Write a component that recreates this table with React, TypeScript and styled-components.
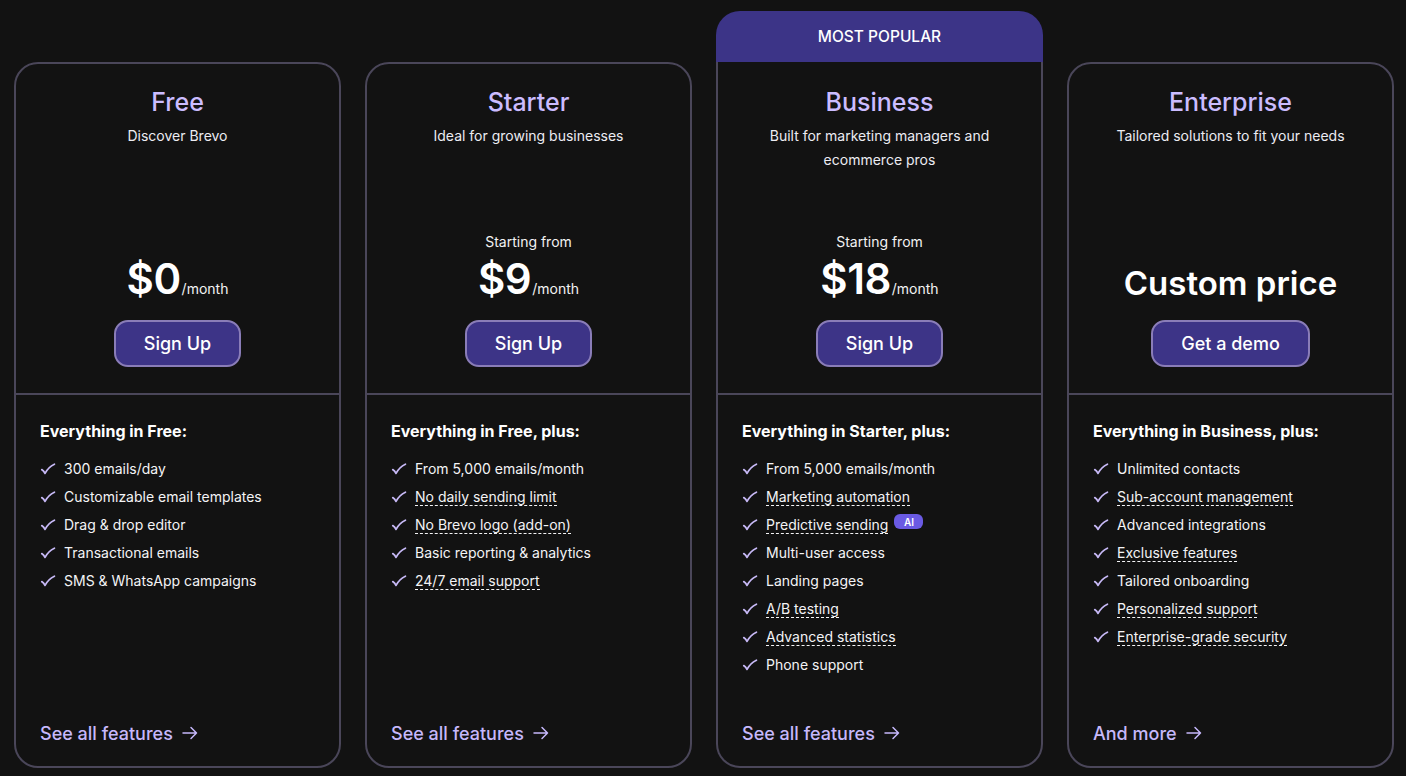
import React from 'react';
import styled, { createGlobalStyle } from 'styled-components';

const GlobalStyle = createGlobalStyle`
	html, body {
		margin: 0;
		padding: 0;
		background: #121212;
	}
	body {
		font-family: Inter, 'Noto Sans', sans-serif;
		color: #f2f2f2;
		-webkit-font-smoothing: antialiased;
	}
`;

interface Feature {
	label: string;
	dashed?: boolean;
	ai?: boolean;
}

interface Plan {
	name: string;
	tagline: string;
	note?: string;
	price?: string;
	customPrice?: string;
	cta: string;
	includes: string;
	features: Feature[];
	link: string;
	popular?: boolean;
}

const plans: Plan[] = [
	{
		name: 'Free',
		tagline: 'Discover Brevo',
		price: '$0',
		cta: 'Sign Up',
		includes: 'Everything in Free:',
		features: [
			{ label: '300 emails/day' },
			{ label: 'Customizable email templates' },
			{ label: 'Drag & drop editor' },
			{ label: 'Transactional emails' },
			{ label: 'SMS & WhatsApp campaigns' }
		],
		link: 'See all features'
	},
	{
		name: 'Starter',
		tagline: 'Ideal for growing businesses',
		note: 'Starting from',
		price: '$9',
		cta: 'Sign Up',
		includes: 'Everything in Free, plus:',
		features: [
			{ label: 'From 5,000 emails/month' },
			{ label: 'No daily sending limit', dashed: true },
			{ label: 'No Brevo logo (add-on)', dashed: true },
			{ label: 'Basic reporting & analytics' },
			{ label: '24/7 email support', dashed: true }
		],
		link: 'See all features'
	},
	{
		name: 'Business',
		tagline: 'Built for marketing managers and ecommerce pros',
		note: 'Starting from',
		price: '$18',
		cta: 'Sign Up',
		includes: 'Everything in Starter, plus:',
		features: [
			{ label: 'From 5,000 emails/month' },
			{ label: 'Marketing automation', dashed: true },
			{ label: 'Predictive sending', dashed: true, ai: true },
			{ label: 'Multi-user access' },
			{ label: 'Landing pages' },
			{ label: 'A/B testing', dashed: true },
			{ label: 'Advanced statistics', dashed: true },
			{ label: 'Phone support' }
		],
		link: 'See all features',
		popular: true
	},
	{
		name: 'Enterprise',
		tagline: 'Tailored solutions to fit your needs',
		customPrice: 'Custom price',
		cta: 'Get a demo',
		includes: 'Everything in Business, plus:',
		features: [
			{ label: 'Unlimited contacts' },
			{ label: 'Sub-account management', dashed: true },
			{ label: 'Advanced integrations' },
			{ label: 'Exclusive features', dashed: true },
			{ label: 'Tailored onboarding' },
			{ label: 'Personalized support', dashed: true },
			{ label: 'Enterprise-grade security', dashed: true }
		],
		link: 'And more'
	}
];

const Page = styled.div`
	display: grid;
	grid-template-columns: repeat(4, 327px);
	gap: 24px;
	padding: 11px 13px 8px 14px;
	align-items: stretch;
`;

const Column = styled.div`
	display: flex;
	flex-direction: column;
`;

const Banner = styled.div<{ $visible: boolean }>`
	height: 51px;
	flex-shrink: 0;
	display: flex;
	align-items: center;
	justify-content: center;
	border-radius: 24px 24px 0 0;
	background: ${(p) => (p.$visible ? '#3c3487' : 'transparent')};
	color: #ffffff;
	font-size: 15.5px;
	font-weight: 500;
`;

const Card = styled.div<{ $popular: boolean }>`
	flex: 1;
	display: flex;
	flex-direction: column;
	border: 2px solid #4a4659;
	border-top-width: ${(p) => (p.$popular ? 0 : 2)}px;
	border-radius: ${(p) => (p.$popular ? '0 0 24px 24px' : '24px')};
	padding-top: ${(p) => (p.$popular ? 2 : 0)}px;
`;

const Top = styled.div`
	height: 331px;
	box-sizing: border-box;
	display: flex;
	flex-direction: column;
	align-items: center;
	padding: 22px 24px 26px;
	border-bottom: 2px solid #4a4659;
	text-align: center;
`;

const Name = styled.h2`
	margin: 0;
	font-size: 25px;
	line-height: 32px;
	font-weight: 500;
	color: #cbbcff;
`;

const Tagline = styled.p`
	margin: 6px 0 0;
	max-width: 250px;
	font-size: 14px;
	line-height: 24px;
	color: #ececf2;
`;

const PriceBlock = styled.div`
	margin-top: auto;
	display: flex;
	flex-direction: column;
	align-items: center;
`;

const Note = styled.div`
	height: 20px;
	font-size: 14px;
	line-height: 20px;
	color: #f2f2f2;
`;

const PriceRow = styled.div`
	margin-top: 3px;
	height: 48px;
	display: flex;
	align-items: baseline;
	justify-content: center;
	line-height: 48px;
`;

const Amount = styled.span`
	font-size: 42px;
	font-weight: 600;
	color: #ffffff;
	letter-spacing: -0.5px;
`;

const CustomAmount = styled.span`
	align-self: flex-end;
	margin-bottom: 4px;
	font-size: 33px;
	line-height: 32px;
	font-weight: 600;
	color: #ffffff;
`;

const Per = styled.span`
	font-size: 14px;
	color: #f2f2f2;
	margin-left: 1px;
`;

const Button = styled.button`
	margin-top: 17px;
	height: 47px;
	padding: 0 28px;
	box-sizing: border-box;
	border: 2px solid #8a7db8;
	border-radius: 14px;
	background: #3d3487;
	color: #ffffff;
	font-family: inherit;
	font-size: 18px;
	font-weight: 500;
	cursor: pointer;
`;

const Bottom = styled.div`
	flex: 1;
	display: flex;
	flex-direction: column;
	padding: 24px 24px 21px;
`;

const Includes = styled.div`
	font-size: 16px;
	line-height: 24px;
	font-weight: 700;
	color: #ffffff;
`;

const List = styled.ul`
	list-style: none;
	margin: 11px 0 43px;
	padding: 0;
`;

const Item = styled.li`
	display: flex;
	align-items: center;
	gap: 8px;
	height: 28px;
	font-size: 14px;
	color: #f4f4f6;
`;

const Label = styled.span<{ $dashed?: boolean }>`
	line-height: 17px;
	border-bottom: 1px ${(p) => (p.$dashed ? 'dashed #f4f4f6' : 'solid transparent')};
	margin-top: 1px;
`;

const AiBadge = styled.span`
	display: inline-flex;
	align-items: center;
	justify-content: center;
	width: 29px;
	height: 15px;
	margin-left: -2px;
	margin-top: -5px;
	border-radius: 6px;
	background: #6a5ae3;
	color: #ffffff;
	font-size: 10px;
	font-weight: 600;
`;

const MoreLink = styled.a`
	margin-top: auto;
	display: inline-flex;
	align-items: center;
	gap: 8px;
	height: 24px;
	font-size: 18px;
	font-weight: 500;
	color: #c6b8fb;
	text-decoration: none;
	cursor: pointer;
`;

const CheckIcon = () => (
	<svg width="16" height="16" viewBox="0 0 16 16" fill="none" style={{ flexShrink: 0 }}>
		<path
			d="M1.8 9.6 C3 10.2 4.2 11.5 5 13.4 C7 9.6 9.8 6.4 14.4 4.2"
			stroke="#c7b9f6"
			strokeWidth="1.8"
			strokeLinecap="round"
			strokeLinejoin="round"
		/>
	</svg>
);

const ArrowIcon = () => (
	<svg width="18" height="18" viewBox="0 0 18 18" fill="none">
		<path
			d="M2 9 H15.5 M10 3.5 L15.5 9 L10 14.5"
			stroke="#c6b8fb"
			strokeWidth="1.5"
			strokeLinecap="round"
			strokeLinejoin="round"
		/>
	</svg>
);

const PlanCard: React.FC<{ plan: Plan }> = ({ plan }) => (
	<Column>
		<Banner $visible={!!plan.popular}>{plan.popular ? 'MOST POPULAR' : null}</Banner>
		<Card $popular={!!plan.popular}>
			<Top>
				<Name>{plan.name}</Name>
				<Tagline>{plan.tagline}</Tagline>
				<PriceBlock>
					<Note>{plan.note}</Note>
					<PriceRow>
						{plan.customPrice ? (
							<CustomAmount>{plan.customPrice}</CustomAmount>
						) : (
							<>
								<Amount>{plan.price}</Amount>
								<Per>/month</Per>
							</>
						)}
					</PriceRow>
				</PriceBlock>
				<Button>{plan.cta}</Button>
			</Top>
			<Bottom>
				<Includes>{plan.includes}</Includes>
				<List>
					{plan.features.map((f) => (
						<Item key={f.label}>
							<CheckIcon />
							<Label $dashed={f.dashed}>{f.label}</Label>
							{f.ai && <AiBadge>AI</AiBadge>}
						</Item>
					))}
				</List>
				<MoreLink>
					{plan.link}
					<ArrowIcon />
				</MoreLink>
			</Bottom>
		</Card>
	</Column>
);

export default function App() {
	return (
		<>
			<GlobalStyle />
			<Page>
				{plans.map((p) => (
					<PlanCard key={p.name} plan={p} />
				))}
			</Page>
		</>
	);
}
